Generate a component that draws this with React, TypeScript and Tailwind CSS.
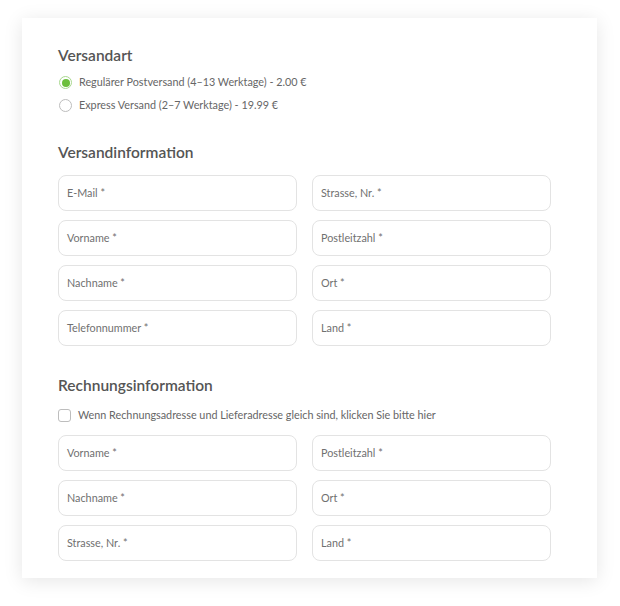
import React from "react";

const font = { fontFamily: "Lato, 'Open Sans', sans-serif" };

function Field({ label }: { label: string }) {
  return (
    <div className="h-[36px] w-[239px] rounded-[8px] border border-[#e3e3e3] bg-white flex items-center pl-[8px] text-[10.8px] text-[#707070]">
      {label}
    </div>
  );
}

function Grid({ rows }: { rows: [string, string][] }) {
  return (
    <div className="grid grid-cols-[239px_239px] gap-x-[15px] gap-y-[9px]">
      {rows.map(([a, b], i) => (
        <React.Fragment key={i}>
          <Field label={a} />
          <Field label={b} />
        </React.Fragment>
      ))}
    </div>
  );
}

export default function App() {
  return (
    <div className="w-[620px] h-[606px] bg-white pt-[18px] pl-[22px]" style={font}>
      <div className="w-[575px] h-[560px] bg-white shadow-[0_3px_18px_rgba(0,0,0,0.10)] pl-[36px] pt-[27px]">
        <h2 className="text-[15.5px] leading-[20px] font-semibold text-[#555555]">Versandart</h2>
        <div className="mt-[11px] flex flex-col gap-[10px]">
          <div className="flex items-center h-[13px] text-[10.8px] text-[#666666]">
            <span className="w-[13px] h-[13px] rounded-full border border-[#a9d88f] flex items-center justify-center ml-[1px] mr-[7px]">
              <span className="w-[8px] h-[8px] rounded-full bg-[#6cbf3c]" />
            </span>
            Regulärer Postversand (4–13 Werktage) - 2.00 €
          </div>
          <div className="flex items-center h-[13px] text-[10.8px] text-[#666666]">
            <span className="w-[13px] h-[13px] rounded-full border border-[#bdbdbd] ml-[1px] mr-[7px]" />
            Express Versand (2–7 Werktage) - 19.99 €
          </div>
        </div>
        <h2 className="mt-[30px] text-[15.5px] leading-[20px] font-semibold text-[#555555]">Versandinformation</h2>
        <div className="mt-[13px]">
          <Grid
            rows={[
              ["E-Mail *", "Strasse, Nr. *"],
              ["Vorname *", "Postleitzahl *"],
              ["Nachname *", "Ort *"],
              ["Telefonnummer *", "Land *"],
            ]}
          />
        </div>
        <h2 className="mt-[29px] text-[15.5px] leading-[20px] font-semibold text-[#555555]">Rechnungsinformation</h2>
        <div className="mt-[14px] flex items-center h-[13px] text-[10.8px] text-[#666666]">
          <span className="w-[13px] h-[13px] rounded-[3px] border border-[#bdbdbd] mr-[7px]" />
          Wenn Rechnungsadresse und Lieferadresse gleich sind, klicken Sie bitte hier
        </div>
        <div className="mt-[13px]">
          <Grid
            rows={[
              ["Vorname *", "Postleitzahl *"],
              ["Nachname *", "Ort *"],
              ["Strasse, Nr. *", "Land *"],
            ]}
          />
        </div>
      </div>
    </div>
  );
}
